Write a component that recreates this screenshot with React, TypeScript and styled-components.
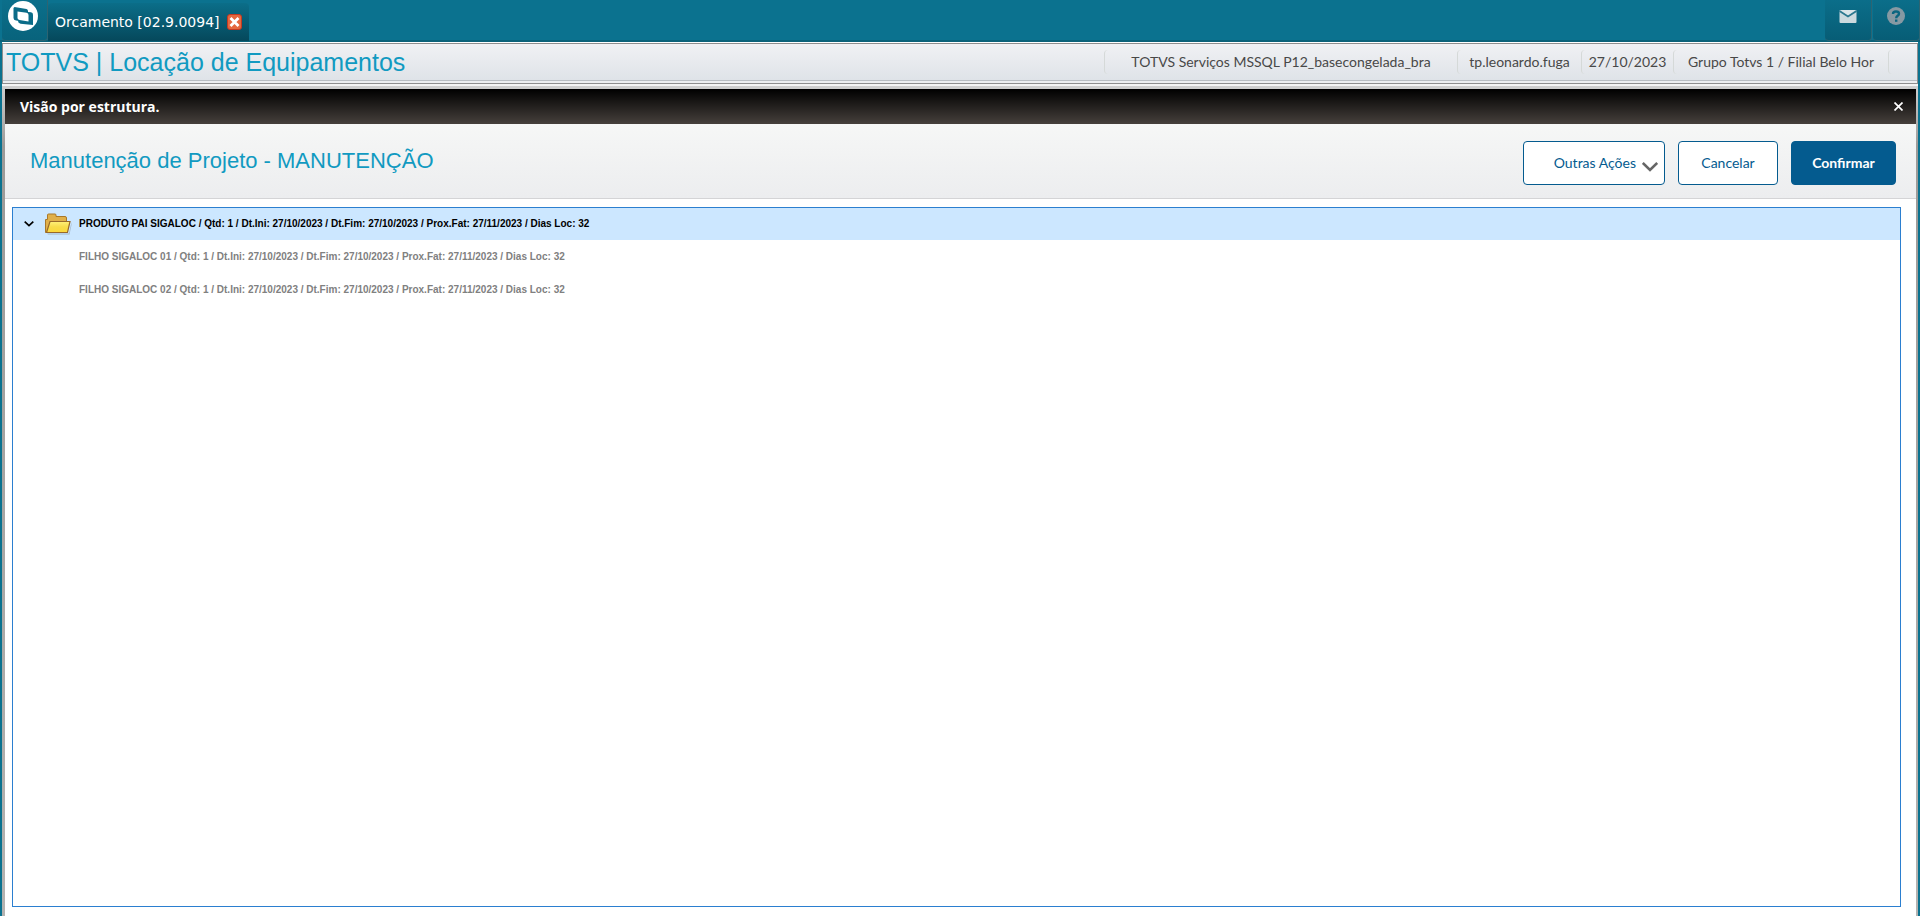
import React, { useState } from "react";
import styled, { createGlobalStyle, css } from "styled-components";

const teal = "#0b728f";
const accent = "#119ac1";
const navy = "#045b8f";
const uiFont = `Lato, "Open Sans", sans-serif`;
const arial = `"Liberation Sans", Arial, sans-serif`;

const GlobalStyle = createGlobalStyle`
  * { box-sizing: border-box; }
  body { margin: 0; background: ${teal}; font-family: ${arial}; }
  button { margin: 0; padding: 0; border: 0; background: none; font: inherit; cursor: pointer; }
  h1, h2, p, ul { margin: 0; padding: 0; font-weight: 400; }
`;

const Page = styled.div`
  display: flex;
  flex-direction: column;
  min-height: 100vh;
  background: ${teal};
`;

/* Top bar */

const TopBar = styled.header`
  display: flex;
  height: 42px;
  padding-left: 2px;
  border-bottom: 2px solid #0a627a;
`;

const Tile = styled.button`
  display: flex;
  justify-content: center;
  align-items: flex-start;
  width: 47px;
  height: 41px;
  border: solid #2d6472;
  border-width: 0 1px 1px 0;
  border-radius: 0 0 4px 4px;
  background: linear-gradient(#0b6f8b, #08637c);
`;

const HomeTile = styled(Tile)`
  width: 46px;
  padding-right: 3px;
`;

const IconTile = styled(Tile)`
  padding-top: 7px;
  background: linear-gradient(#0b6e8a, #075d76);
`;

const Tab = styled.div`
  display: flex;
  align-items: center;
  gap: 7px;
  height: 38px;
  margin-top: 3px;
  padding: 0 7px;
  border-radius: 4px 4px 0 0;
  background: linear-gradient(#0b6e89, #05485b);
  color: #fff;
  font: 14px/20px "DejaVu Sans", Verdana, sans-serif;
  white-space: nowrap;
`;

const TabClose = styled.button`
  display: flex;
`;

const TopActions = styled.div`
  display: flex;
  gap: 1px;
  margin-left: auto;
`;

/* Product band */

const Band = styled.section`
  display: flex;
  align-items: center;
  height: 41px;
  border: 1px solid #8e8e8e;
  background: linear-gradient(#f0f1f4, #dfe3e8 36px, #b9bec3 36px, #b9bec3 37px, #eceef0 37px);
  box-shadow: 0 -1px 0 #fff;
  margin: 1px 2px 0;
`;

const ProductName = styled.h1`
  flex: 1;
  padding: 0 3px;
  color: ${accent};
  font-size: 25px;
  line-height: 36px;
  margin-bottom: 4px;
  white-space: nowrap;
`;

const SessionList = styled.ul`
  display: flex;
  list-style: none;
  margin-bottom: 4px;
`;

const SessionItem = styled.li<{ $width: number }>`
  width: ${(p) => p.$width}px;
  height: 24px;
  border-left: 1px solid #d5d9d8;
  border-radius: 4px 0 0 4px;
  color: #484848;
  font: 14px/24px ${uiFont};
  text-align: center;
  white-space: nowrap;
`;

/* Dialog */

const Frame = styled.main`
  display: flex;
  flex: 1;
  flex-direction: column;
  margin: 0 2px;
  padding: 3px 2px 0 3px;
  border-top: 2px solid #f4f4f4;
  background: linear-gradient(#cfcfcf, #9c9a98 60px, #b5b3b1);
`;

const Dialog = styled.section`
  display: flex;
  flex: 1;
  flex-direction: column;
  background: #fff;
`;

const DialogBar = styled.div`
  display: flex;
  align-items: center;
  justify-content: space-between;
  height: 35px;
  padding: 0 13px 0 15px;
  background: linear-gradient(#000, #46403c);
  color: #fff;
`;

const DialogTitle = styled.h2`
  font: 700 14px/20px "Open Sans", sans-serif;
`;

const DialogClose = styled.button`
  display: flex;
`;

const DialogHeader = styled.div`
  display: flex;
  align-items: center;
  justify-content: space-between;
  height: 75px;
  padding: 4px 20px 0 25px;
  border-bottom: 1px solid #d4d4d6;
  background: linear-gradient(#f6f7f6, #ecedef);
`;

const Heading = styled.h2`
  margin-bottom: 4px;
  color: ${accent};
  font-size: 22px;
  line-height: 28px;
`;

const Actions = styled.div`
  display: flex;
  gap: 13px;
`;

const ActionButton = styled.button<{ $primary?: boolean; $width: number }>`
  display: flex;
  align-items: center;
  justify-content: center;
  gap: 6px;
  width: ${(p) => p.$width}px;
  height: 44px;
  padding-bottom: 1px;
  border: 1px solid ${navy};
  border-radius: 4px;
  background: #fff;
  color: ${navy};
  font: 14px/20px ${uiFont};
  ${(p) =>
    p.$primary &&
    css`
      background: ${navy};
      color: #fff;
      font-weight: 700;
    `}
`;

const MenuButton = styled(ActionButton)`
  justify-content: flex-end;
  padding-right: 6px;
  svg { margin-top: 8px; }
`;

/* Tree */

const Tree = styled.ul`
  display: flex;
  flex: 1;
  flex-direction: column;
  gap: 1px;
  margin: 8px 15px 9px 7px;
  border: 1px solid #2b7fd0;
  list-style: none;
`;

const TreeRow = styled.li<{ $child?: boolean }>`
  display: flex;
  align-items: center;
  height: 32px;
  padding-left: ${(p) => (p.$child ? 66 : 11)}px;
  background: ${(p) => (p.$child ? "#fff" : "#cce7ff")};
  color: ${(p) => (p.$child ? "#808080" : "#000")};
  font: 700 10px/16px ${arial};
  white-space: nowrap;
`;

const Toggle = styled.button`
  display: flex;
  margin-right: 10px;
`;

const FolderIcon = styled.svg`
  margin-right: 7px;
`;

const session = [
  { text: "TOTVS Serviços MSSQL P12_basecongelada_bra", width: 353 },
  { text: "tp.leonardo.fuga", width: 124 },
  { text: "27/10/2023", width: 92 },
  { text: "Grupo Totvs 1 / Filial Belo Hor", width: 215 },
  { text: "", width: 29 },
];

const dates = "Qtd: 1 / Dt.Ini: 27/10/2023 / Dt.Fim: 27/10/2023 / Prox.Fat: 27/11/2023 / Dias Loc: 32";

export default function App() {
  const [open, setOpen] = useState(true);

  return (
    <Page>
      <GlobalStyle />
      <TopBar>
        <HomeTile aria-label="Início">
          <svg width="30" height="32" viewBox="0 0 30 32">
            <circle cx="15" cy="16" r="15" fill="#fff" />
            <g fill="#0b6c88">
              <path d="M6.500 7 L18.500 9 Q20 9.300 20 11 V22.500 L8 20.500 Q5.500 20 5.500 18 V8 Z" />
              <path d="M10 11 L23 12.200 Q25 12.500 25 14.500 V25 L12.500 23.700 Q10 23.300 10 21 Z" />
            </g>
            <path d="M9.500 11.500 L18.500 12.800 Q20.500 13.200 20.500 15 V21.500 L11.500 20 Q9.500 19.600 9.500 18 Z" fill="#fff" />
          </svg>
        </HomeTile>
        <Tab>
          Orcamento [02.9.0094]
          <TabClose aria-label="Fechar aba">
            <svg width="15" height="16" viewBox="0 0 15 16">
              <rect x="0.500" y="0.500" width="14" height="15" rx="2.500" fill="#e5683f" stroke="#c33a22" />
              <path d="M3.500 4 L11.500 12 M11.500 4 L3.500 12" stroke="#fff" strokeWidth="2.800" />
            </svg>
          </TabClose>
        </Tab>
        <TopActions>
          <IconTile aria-label="Mensagens">
            <svg width="18" height="18" viewBox="0 0 18 18">
              <rect x="0.500" y="3" width="17" height="13" rx="1" fill="#ccdadf" />
              <path d="M0.500 4 L9 9.500 L17.500 4" fill="none" stroke="#2b788f" strokeWidth="1.800" />
              <path d="M1.500 3 H16.500 L9 8 Z" fill="#dbe5e9" />
            </svg>
          </IconTile>
          <IconTile aria-label="Ajuda">
            <svg width="18" height="18" viewBox="0 0 18 18" fill="none">
              <circle cx="9" cy="9" r="9" fill="#8699a3" />
              <path
                d="M6 7 Q6 4.500 9 4.500 Q12 4.500 12 6.700 Q12 8 10.500 8.900 Q9.200 9.700 9.200 11.300"
                stroke="#0b6580"
                strokeWidth="2.400"
              />
              <rect x="8" y="12.500" width="2.400" height="2.300" fill="#0b6580" />
            </svg>
          </IconTile>
        </TopActions>
      </TopBar>

      <Band>
        <ProductName>TOTVS | Locação de Equipamentos</ProductName>
        <SessionList>
          {session.map((item) => (
            <SessionItem key={item.width} $width={item.width}>
              {item.text}
            </SessionItem>
          ))}
        </SessionList>
      </Band>

      <Frame>
        <Dialog>
          <DialogBar>
            <DialogTitle>Visão por estrutura.</DialogTitle>
            <DialogClose aria-label="Fechar">
              <svg width="9" height="9" viewBox="0 0 9 9">
                <path d="M0.500 0.500 L8.500 8.500 M8.500 0.500 L0.500 8.500" stroke="#fff" strokeWidth="1.700" />
              </svg>
            </DialogClose>
          </DialogBar>
          <DialogHeader>
            <Heading>Manutenção de Projeto - MANUTENÇÃO</Heading>
            <Actions>
              <MenuButton $width={142}>
                Outras Ações
                <svg width="16" height="10" viewBox="0 0 16 10" fill="none">
                  <path d="M0.800 1 L8 8 L15.200 1" stroke="#666" strokeWidth="2.600" />
                </svg>
              </MenuButton>
              <ActionButton $width={100}>Cancelar</ActionButton>
              <ActionButton $width={105} $primary>
                Confirmar
              </ActionButton>
            </Actions>
          </DialogHeader>
          <Tree>
            <TreeRow>
              <Toggle aria-label="Expandir" aria-expanded={open} onClick={() => setOpen(!open)}>
                <svg width="10" height="6" viewBox="0 0 10 6" fill="none">
                  <path d="M0.700 0.700 L5 4.700 L9.300 0.700" stroke="#000" strokeWidth="1.700" />
                </svg>
              </Toggle>
              <FolderIcon width="28" height="22" viewBox="0 0 28 22">
                <defs>
                  <linearGradient id="flap" x1="0" y1="0" x2="0" y2="1">
                    <stop offset="0" stopColor="#fff07a" />
                    <stop offset="0.500" stopColor="#f8dc4a" />
                    <stop offset="1" stopColor="#fbd83c" />
                  </linearGradient>
                </defs>
                <path d="M3 20.500 H25 L27.500 9 V12 L25.500 21.500 H4 Z" fill="#8a9aa6" opacity="0.600" />
                <path
                  d="M1.500 19.500 V6.500 H3.500 V2 Q3.500 1 4.500 1 H11 Q12 1 12 2 V3.500 H21 Q22.500 3.500 22.500 5 V9 L23 19.500 Z"
                  fill="#e0b04a"
                  stroke="#a8782a"
                />
                <path d="M6 8.500 H26 L23.500 19.500 H2.500 Z" fill="url(#flap)" stroke="#98692a" strokeWidth="1.200" />
              </FolderIcon>
              PRODUTO PAI SIGALOC / {dates}
            </TreeRow>
            {open && (
              <>
                <TreeRow $child>FILHO SIGALOC 01 / {dates}</TreeRow>
                <TreeRow $child>FILHO SIGALOC 02 / {dates}</TreeRow>
              </>
            )}
          </Tree>
        </Dialog>
      </Frame>
    </Page>
  );
}
